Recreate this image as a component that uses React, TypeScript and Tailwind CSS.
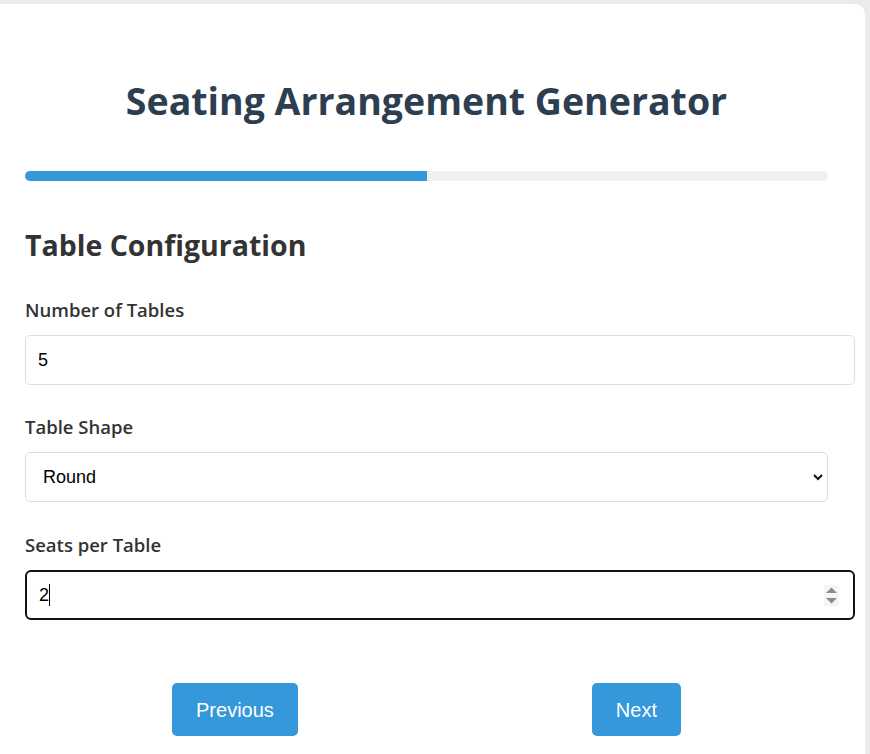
import { useState } from 'react';

export default function App() {
  const [tables, setTables] = useState('5');
  const [shape, setShape] = useState('Round');
  const step = 1;
  const totalSteps = 2;

  return (
    <div className="min-h-screen bg-[#ebebeb] pt-1 font-['Open_Sans','Noto_Sans',sans-serif]">
      <div className="w-[865px] min-h-[750px] bg-white rounded-tr-[10px] pl-[25px] pr-[37px] pt-[69px]">
        <h1 className="text-center text-[37.5px] leading-[56px] font-bold text-[#2c3e50]">
          Seating Arrangement Generator
        </h1>

        {/* progress */}
        <div className="mt-[42px] h-[10px] w-[803px] rounded-full bg-[#ecf0f1] overflow-hidden">
          <div className="h-full bg-[#3498db]" style={{ width: `${(step / totalSteps) * 100}%` }}></div>
        </div>

        <h2 className="mt-[45px] text-[28.5px] leading-[38px] font-bold text-[#333]">Table Configuration</h2>

        <div className="mt-[34px]">
          <label className="block text-[18.5px] leading-6 font-semibold text-[#333] mb-[13px]">
            Number of Tables
          </label>
          <input
            type="text"
            value={tables}
            onChange={(e) => setTables(e.target.value)}
            className="block w-[830px] h-[50px] px-3 border border-[#ddd] rounded-[5px] font-['Liberation_Sans',sans-serif] text-[18px] text-black outline-none"
          />
        </div>

        <div className="mt-[30px]">
          <label className="block text-[18.5px] leading-6 font-semibold text-[#333] mb-[13px]">
            Table Shape
          </label>
          <div className="relative w-[803px]">
            <select
              value={shape}
              onChange={(e) => setShape(e.target.value)}
              className="block w-full h-[50px] pl-[17px] border border-[#ddd] rounded-[5px] bg-white appearance-none font-['Liberation_Sans',sans-serif] text-[18px] text-black outline-none"
            >
              <option>Round</option>
              <option>Rectangle</option>
              <option>Square</option>
            </select>
            <svg className="absolute right-[4px] top-[19px] pointer-events-none" width="12" height="12" viewBox="0 0 12 12">
              <path d="M2 4 L6 8 L10 4" stroke="#111" strokeWidth="2" fill="none" />
            </svg>
          </div>
        </div>

        <div className="mt-[31px]">
          <label className="block text-[18.5px] leading-6 font-semibold text-[#333] mb-[13px]">
            Seats per Table
          </label>
          <div className="flex items-center w-[830px] h-[50px] pl-3 pr-[14px] border-2 border-[#111] rounded-[6px] font-['Liberation_Sans',sans-serif] text-[18px] text-black">
            <span>2</span>
            <span className="w-px h-[22px] bg-black"></span>
            <svg className="ml-auto" width="15" height="21" viewBox="0 0 15 21">
              <rect width="15" height="21" fill="#f5f5f5" />
              <path d="M2 8 L7.5 2.5 L13 8 Z" fill="#8a8a8a" />
              <path d="M2 13 L7.5 18.5 L13 13 Z" fill="#8a8a8a" />
            </svg>
          </div>
        </div>

        <div className="mt-[63px] w-[803px] flex justify-around">
          <button className="h-[53px] px-6 rounded-[5px] bg-[#3498db] text-white text-[20px] font-['Liberation_Sans',sans-serif]">
            Previous
          </button>
          <button className="h-[53px] px-6 rounded-[5px] bg-[#3498db] text-white text-[20px] font-['Liberation_Sans',sans-serif]">
            Next
          </button>
        </div>
      </div>
    </div>
  );
}
